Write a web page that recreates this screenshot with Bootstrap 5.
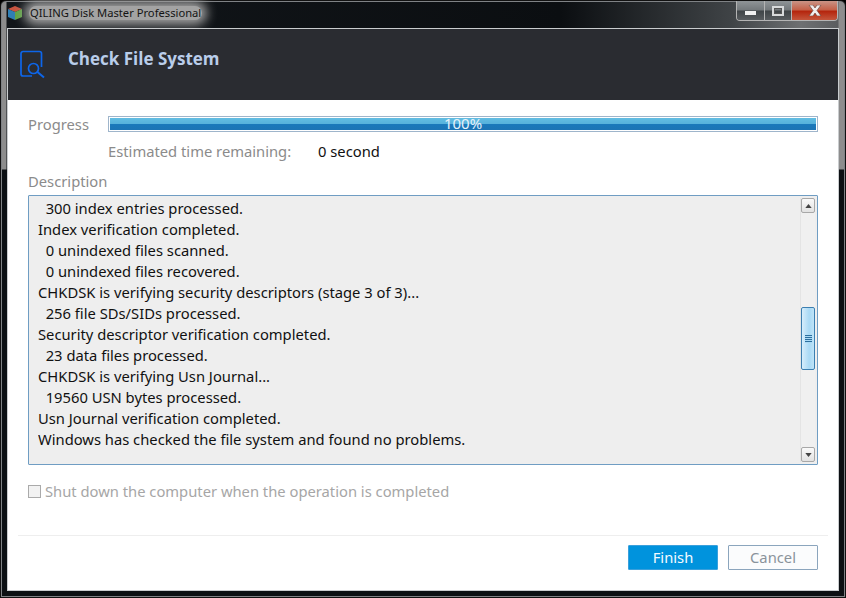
<!DOCTYPE html>
<html lang="en">
<head>
<meta charset="utf-8">
<title>QILING Disk Master Professional</title>
<link rel="stylesheet" href="https://cdn.jsdelivr.net/npm/bootstrap@5.3.0/dist/css/bootstrap.min.css">
<style>
html,body{height:100%;margin:0;background:#000}
body{font-family:"Noto Sans","Open Sans","Liberation Sans",sans-serif;font-size:14.75px;color:#111;overflow:hidden}
.win-frame{width:846px;height:598px;padding:0 6px 6px 6px;border:1px solid #111;border-radius:6px 6px 0 0;
 box-shadow:inset 0 0 0 1px #7f8285;
 background:linear-gradient(180deg,rgba(0,0,0,0) 0,rgba(0,0,0,0) 168px,#0c1013 169px),
 linear-gradient(90deg,#8d8d8d 0,#8d8d8d 5px,#12161a 6px,#0b0e11 560px,#3f4346 730px,#6e7072 800px,#5b5d5f 837px,#8d8d8d 838px);}
.win-title{height:27px}
.title-name{font-size:11.2px;line-height:14px;color:#141414;margin-left:6px;padding:0 1px;background:#a3a3a3;box-shadow:0 0 11px 5px #a3a3a3;border-radius:7px;font-family:"Noto Sans",sans-serif}
.cap-btns{margin-top:0;height:20px;border:1px solid #b4b4b4;border-top:0;border-radius:0 0 4px 4px;overflow:hidden;margin-right:1px}
.cap-min,.cap-max,.cap-close{display:flex;align-items:center;justify-content:center;height:19px}
.cap-min,.cap-max{background:linear-gradient(180deg,#8f9497 0,#73787b 48%,#3f4447 52%,#585c5f 100%);border-right:1px solid #b4b4b4}
.cap-min{width:28px}.cap-max{width:27px}
.cap-close{width:45px;background:linear-gradient(180deg,#c99486 0,#c4624a 45%,#b5260e 55%,#c4563c 100%)}
.min-glyph{width:11px;height:4px;background:#f0f0f0;margin-top:5px}
.max-glyph{width:12px;height:10px;border:2.5px solid #d8dadb;box-shadow:inset 0 0 0 1px #555}
.cap-close svg{display:block}
.win-panel{height:563px;background:#fff;border:1px solid #c9ccce}
.head-band{height:71px;background:#2a2c31;padding-left:12px}
.head-title{font-size:17px;font-weight:700;color:#b9cdea;margin-left:21px;margin-top:-12px;font-family:"Open Sans","Noto Sans",sans-serif}
.body-area{padding:0 20px}
.muted-label{color:#8b8b8b;line-height:20px}
.label-col{width:80px;flex:0 0 80px}
.row-progress{margin-top:14px;height:19px}
.bar-track{width:710px;flex:0 0 710px;height:16px;background:#fff;border:1px solid #9fb5cb;border-radius:0;padding:1px;overflow:visible}
.bar-fill{width:100%;font-size:15px;line-height:14px;color:#e8f2fa;overflow:visible;padding-bottom:2px;
 background:linear-gradient(180deg,#62bde2 0,#57b2dc 46%,#1a78ba 54%,#1c74b5 100%)}
.row-time{margin-top:8px;margin-left:80px;line-height:20px}
.time-label{width:210px}
.desc-title{margin-top:10px;line-height:20px}
.log-box{height:270px;margin-top:4px;border:1px solid #6f9dc3;background:#eeeeee;width:790px;padding:2px 2px 2px 9px;border-radius:1px}
.log-lines{line-height:21px;white-space:pre;flex:1 1 auto;overflow:hidden}
.sc-rail{width:15px;background:#f0f0f0;border-left:1px solid #e4e4e4}
.sc-arrow{width:14px;height:15px;background:linear-gradient(180deg,#fafafa,#e2e2e2);border:1px solid #a8a8a8;border-radius:2px;display:flex;align-items:center;justify-content:center}
.sc-track{flex:1 1 auto;padding-top:94px}
.sc-thumb{height:63px;width:14px;border:1px solid #3c7fb1;border-radius:2px;background:linear-gradient(90deg,#d6edfb,#a9d9f5 60%,#bfe4f8);display:flex;align-items:center;justify-content:center}
.grip{width:7px;height:8px;background:repeating-linear-gradient(180deg,#2c6f9e 0,#2c6f9e 1px,#a9d9f5 1px,#a9d9f5 2px)}
.shut-row{margin-top:16px;height:20px;color:#a6a6a6;line-height:20px}
.fake-check{width:13px;height:13px;border:1px solid #aaa;background:#f2f2f2;margin-right:4px}
.foot-rule{margin:34px -10px 0 -10px;border-top:1px solid #eee;height:0}
.foot-row{margin-top:9px;gap:10px}
.btn-finish,.btn-cancel{width:90px;height:25px;padding:0;border-radius:1px;font-size:14.75px;line-height:23px}
.btn-finish{background:#0093dd;border:1px solid #3aa0dc;color:#f4fbff}
.btn-cancel{background:#fbfcfd;border:1px solid #8ba5bd;color:#8a939b}
</style>
</head>
<body>
<div class="win-frame d-flex flex-column">
  <div class="win-title d-flex align-items-start justify-content-between">
    <div class="d-flex align-items-center pt-1">
      <svg width="16" height="16" viewBox="0 0 16 16" class="flex-shrink-0">
        <path d="M8 1 15 4 8 7 1 4Z" fill="#c9543f"/>
        <path d="M1 4 8 7V15L1 12Z" fill="#2f7fb5"/>
        <path d="M15 4 8 7V15L15 12Z" fill="#5fa544"/>
      </svg>
      <span class="title-name">QILING Disk Master Professional</span>
    </div>
    <div class="cap-btns d-flex">
      <div class="cap-min"><div class="min-glyph"></div></div>
      <div class="cap-max"><div class="max-glyph"></div></div>
      <div class="cap-close">
        <svg width="14" height="11" viewBox="0 0 14 11"><path d="M1 0H5L7 3 9 0H13L9 5.500 13 11H9L7 8 5 11H1L5 5.500Z" fill="#f1eeee" stroke="#5a3a34" stroke-width=".6"/></svg>
      </div>
    </div>
  </div>
  <div class="win-panel">
    <div class="head-band d-flex align-items-center">
      <svg width="27" height="30" viewBox="0 0 27 30" fill="none" stroke="#0d66ea" stroke-width="1.700">
        <path d="M21.500 17V3.500A2 2 0 0 0 19.500 1.500H3A2 2 0 0 0 1 3.500V24A2 2 0 0 0 3 26H12"/>
        <circle cx="13.500" cy="18.500" r="5"/>
        <path d="M17.500 22 24 27.500" stroke-width="2"/>
      </svg>
      <div class="head-title">Check File System</div>
    </div>
    <div class="body-area">
      <div class="row-progress d-flex align-items-center">
        <div class="label-col muted-label">Progress</div>
        <div class="progress bar-track">
          <div class="progress-bar bar-fill" role="progressbar" aria-valuenow="100" aria-valuemin="0" aria-valuemax="100">100%</div>
        </div>
      </div>
      <div class="row-time d-flex">
        <div class="time-label muted-label">Estimated time remaining:</div>
        <div>0 second</div>
      </div>
      <div class="desc-title muted-label">Description</div>
      <div class="log-box d-flex">
        <div class="log-lines">  300 index entries processed.
Index verification completed.
  0 unindexed files scanned.
  0 unindexed files recovered.
CHKDSK is verifying security descriptors (stage 3 of 3)...
  256 file SDs/SIDs processed.
Security descriptor verification completed.
  23 data files processed.
CHKDSK is verifying Usn Journal...
  19560 USN bytes processed.
Usn Journal verification completed.
Windows has checked the file system and found no problems.</div>
        <div class="sc-rail d-flex flex-column">
          <div class="sc-arrow"><svg width="7" height="4" viewBox="0 0 8 5"><path d="M4 0 8 5H0Z" fill="#444"/></svg></div>
          <div class="sc-track"><div class="sc-thumb"><div class="grip"></div></div></div>
          <div class="sc-arrow"><svg width="7" height="4" viewBox="0 0 8 5"><path d="M0 0H8L4 5Z" fill="#444"/></svg></div>
        </div>
      </div>
      <div class="shut-row d-flex align-items-center"><span class="fake-check"></span><span>Shut down the computer when the operation is completed</span></div>
      <div class="foot-rule"></div>
      <div class="foot-row d-flex justify-content-end">
        <button type="button" class="btn btn-finish">Finish</button>
        <button type="button" class="btn btn-cancel">Cancel</button>
      </div>
    </div>
  </div>
</div>
</body>
</html>
